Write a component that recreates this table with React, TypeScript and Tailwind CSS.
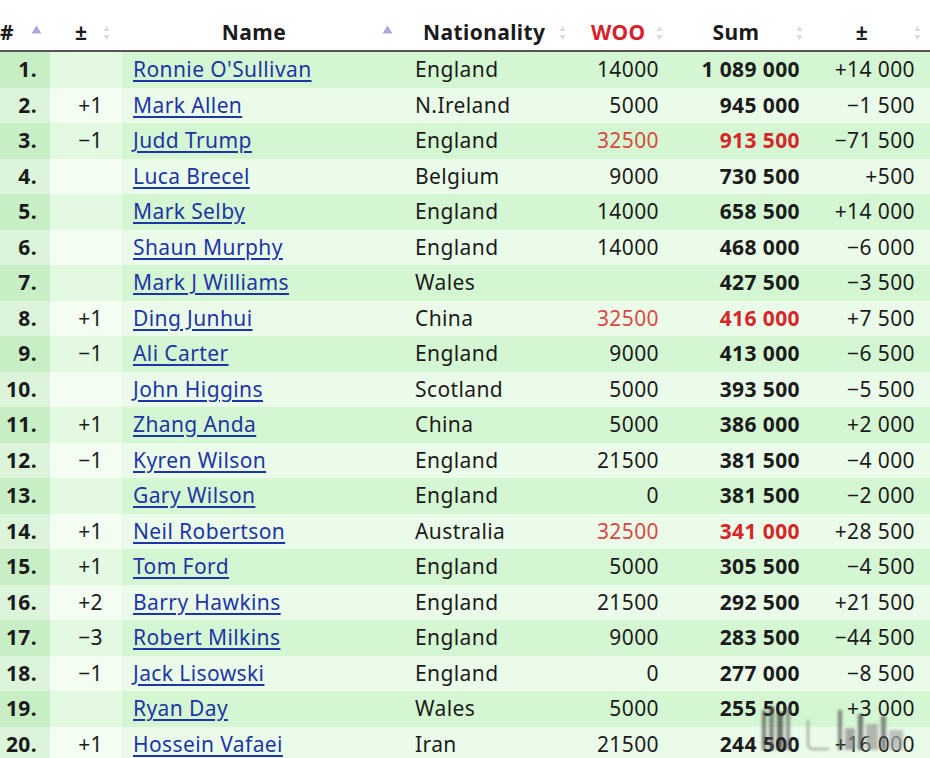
import React from 'react';

type Row = { pos: string; diff: string; name: string; nat: string; woo: string; sum: string; chg: string; hot?: boolean };

const rows: Row[] = [
  { pos: '1.', diff: '', name: "Ronnie O'Sullivan", nat: 'England', woo: '14000', sum: '1 089 000', chg: '+14 000' },
  { pos: '2.', diff: '+1', name: 'Mark Allen', nat: 'N.Ireland', woo: '5000', sum: '945 000', chg: '−1 500' },
  { pos: '3.', diff: '−1', name: 'Judd Trump', nat: 'England', woo: '32500', sum: '913 500', chg: '−71 500', hot: true },
  { pos: '4.', diff: '', name: 'Luca Brecel', nat: 'Belgium', woo: '9000', sum: '730 500', chg: '+500' },
  { pos: '5.', diff: '', name: 'Mark Selby', nat: 'England', woo: '14000', sum: '658 500', chg: '+14 000' },
  { pos: '6.', diff: '', name: 'Shaun Murphy', nat: 'England', woo: '14000', sum: '468 000', chg: '−6 000' },
  { pos: '7.', diff: '', name: 'Mark J Williams', nat: 'Wales', woo: '', sum: '427 500', chg: '−3 500' },
  { pos: '8.', diff: '+1', name: 'Ding Junhui', nat: 'China', woo: '32500', sum: '416 000', chg: '+7 500', hot: true },
  { pos: '9.', diff: '−1', name: 'Ali Carter', nat: 'England', woo: '9000', sum: '413 000', chg: '−6 500' },
  { pos: '10.', diff: '', name: 'John Higgins', nat: 'Scotland', woo: '5000', sum: '393 500', chg: '−5 500' },
  { pos: '11.', diff: '+1', name: 'Zhang Anda', nat: 'China', woo: '5000', sum: '386 000', chg: '+2 000' },
  { pos: '12.', diff: '−1', name: 'Kyren Wilson', nat: 'England', woo: '21500', sum: '381 500', chg: '−4 000' },
  { pos: '13.', diff: '', name: 'Gary Wilson', nat: 'England', woo: '0', sum: '381 500', chg: '−2 000' },
  { pos: '14.', diff: '+1', name: 'Neil Robertson', nat: 'Australia', woo: '32500', sum: '341 000', chg: '+28 500', hot: true },
  { pos: '15.', diff: '+1', name: 'Tom Ford', nat: 'England', woo: '5000', sum: '305 500', chg: '−4 500' },
  { pos: '16.', diff: '+2', name: 'Barry Hawkins', nat: 'England', woo: '21500', sum: '292 500', chg: '+21 500' },
  { pos: '17.', diff: '−3', name: 'Robert Milkins', nat: 'England', woo: '9000', sum: '283 500', chg: '−44 500' },
  { pos: '18.', diff: '−1', name: 'Jack Lisowski', nat: 'England', woo: '0', sum: '277 000', chg: '−8 500' },
  { pos: '19.', diff: '', name: 'Ryan Day', nat: 'Wales', woo: '5000', sum: '255 500', chg: '+3 000' },
  { pos: '20.', diff: '+1', name: 'Hossein Vafaei', nat: 'Iran', woo: '21500', sum: '244 500', chg: '+16 000' },
];

function SortBoth() {
  return (
    <svg width="7" height="16" viewBox="0 0 7 16" className="shrink-0">
      <path d="M3.5 1 L6.5 6 L0.5 6 Z" fill="#dcdcdc" />
      <path d="M3.5 15 L6.5 10 L0.5 10 Z" fill="#dcdcdc" />
    </svg>
  );
}

function SortUp() {
  return (
    <svg width="11" height="9" viewBox="0 0 11 9" className="shrink-0">
      <path d="M5.5 0.5 L10.5 8.5 L0.5 8.5 Z" fill="#aba8de" />
    </svg>
  );
}

export default function App() {
  return (
    <div className="relative w-[930px] h-[758px] overflow-hidden bg-white text-[#1b1b1b] font-['Noto_Sans','Liberation_Sans',sans-serif] text-[21px] tracking-[0.4px]">
      {/* header */}
      <div className="flex h-[52px] pt-[16px] border-b-2 border-[#555] font-bold">
        <div className="w-[50px] flex items-center">
          <span>#</span>
          <span className="ml-auto mr-[8px] -mt-[8px]"><SortUp /></span>
        </div>
        <div className="w-[72px] flex items-center">
          <span className="pl-[25px]">±</span>
          <span className="ml-auto mr-[12px]"><SortBoth /></span>
        </div>
        <div className="w-[283px] flex items-center">
          <span className="flex-1 text-center pl-[4px]">Name</span>
          <span className="mr-[12px] -mt-[8px]"><SortUp /></span>
        </div>
        <div className="w-[165px] flex items-center">
          <span className="pl-[18px]">Nationality</span>
          <span className="ml-auto mr-[4px]"><SortBoth /></span>
        </div>
        <div className="w-[100px] flex items-center">
          <span className="pl-[21px] text-[#d9202c]">WOO</span>
          <span className="ml-auto mr-[7px]"><SortBoth /></span>
        </div>
        <div className="w-[140px] flex items-center">
          <span className="flex-1 text-center pl-[6px]">Sum</span>
          <span className="mr-[7px]"><SortBoth /></span>
        </div>
        <div className="w-[120px] flex items-center">
          <span className="flex-1 text-center">±</span>
          <span className="mr-[9px]"><SortBoth /></span>
        </div>
      </div>

      {/* body */}
      {rows.map((r, i) => {
        const odd = i % 2 === 0;
        return (
          <div key={r.pos} className={`flex h-[35.5px] items-center ${odd ? 'bg-[#d5f6d2]' : 'bg-[#ebfbe9]'}`}>
            <div className={`w-[50px] h-full flex items-center justify-end pr-[13px] font-bold ${odd ? 'bg-[#c8eec5]' : 'bg-[#dcf5da]'}`}>
              {r.pos}
            </div>
            <div className={`w-[72px] h-full flex items-center justify-end pr-[19px] ${odd ? 'bg-[#e3f9e1]' : 'bg-[#f3fdf2]'}`}>
              {r.diff}
            </div>
            <div className="w-[283px] pl-[11px] whitespace-nowrap">
              <span className="text-[#1d35a5] underline underline-offset-[3px] decoration-[1.5px]">{r.name}</span>
            </div>
            <div className="w-[165px] pl-[10px] whitespace-nowrap">{r.nat}</div>
            <div className={`w-[100px] text-right pr-[11px] ${r.hot ? 'text-[#d84a44]' : ''}`}>{r.woo}</div>
            <div className={`w-[140px] text-right pr-[10px] font-bold whitespace-nowrap ${r.hot ? 'text-[#d6262a]' : ''}`}>{r.sum}</div>
            <div className="w-[120px] text-right pr-[15px] whitespace-nowrap">{r.chg}</div>
          </div>
        );
      })}

      {/* watermark */}
      <div className="absolute left-[762px] top-[700px] w-[160px] h-[50px] flex items-end gap-[3px] blur-[1.5px] opacity-70 pointer-events-none">
        <div className="w-[4px] h-[40px] bg-[#444]" />
        <div className="w-[5px] h-[44px] bg-[#555]" />
        <div className="w-[6px] h-[38px] bg-[#333]" />
        <div className="w-[4px] h-[42px] bg-[#666]" />
        <div className="ml-[14px] w-[22px] h-[30px] border-b-2 border-l-2 border-[#777] rounded-bl-md" />
        <div className="ml-[6px] w-[4px] h-[40px] bg-[#555]" />
        <div className="w-[10px] h-[22px] bg-[#888]" />
        <div className="w-[5px] h-[36px] bg-[#444]" />
        <div className="w-[12px] h-[26px] bg-[#999]" />
        <div className="w-[5px] h-[34px] bg-[#555]" />
        <div className="w-[14px] h-[20px] bg-[#aaa]" />
      </div>
    </div>
  );
}
